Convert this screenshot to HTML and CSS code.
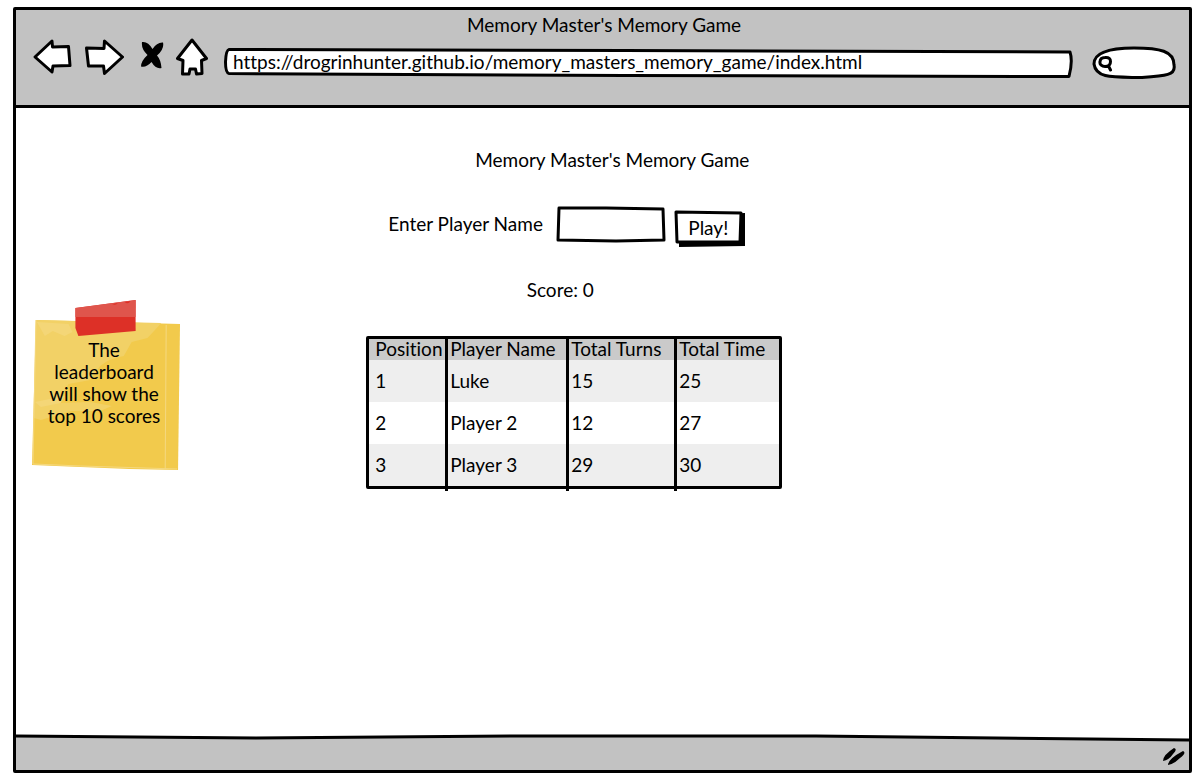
FILE: index.html
```html
<!DOCTYPE html>
<html lang="en">
<head>
<meta charset="utf-8">
<title>Memory Master's Memory Game</title>
<link rel="stylesheet" href="styles.css">
</head>
<body>
<div class="browser">
  <header class="chrome">
    <div class="chrome-title">Memory Master's Memory Game</div>
    <div class="toolbar">
      <button class="tool" aria-label="Back"><svg width="40" height="40" viewBox="0 0 40 40"><path class="sketch" d="M3 19 L20 3 L20.500 9 L36.500 8.500 L38 27.500 L21 28 L20 34 Z"/></svg></button>
      <button class="tool tool-forward" aria-label="Forward"><svg width="40" height="40" viewBox="0 0 40 40"><path class="sketch" d="M38.500 19 L20.500 3 L20 10.500 L2.500 10 L4.500 28 L19.500 28 L20.500 35.500 Z"/></svg></button>
      <button class="tool tool-stop" aria-label="Stop"><svg width="24" height="40" viewBox="0 0 24 40"><path d="M2 4 Q8 3 12.500 11 Q17 4 23 4.500 Q24.500 11 17 17.500 Q21 22 21.500 30 Q16 31.500 11.500 24 Q6 30 1 28.500 Q1 23 7.500 17 Q1 11 2 4Z"/></svg></button>
      <button class="tool tool-home" aria-label="Home"><svg width="32" height="40" viewBox="0 0 32 40"><path class="sketch" d="M16 2 L30.500 20.500 L25.500 22.500 L26 35.500 L20.500 36 L19.500 31 L14 31 L13 36 L6.500 36 L7 22.500 L1.500 20.500 Z"/></svg></button>
      <label class="address">
        <svg class="frame" viewBox="0 0 848 32" preserveAspectRatio="none" aria-hidden="true"><path class="sketch" d="M5 2.500 Q2 3 1.500 15 Q1.500 26 5 26.500 L400 28.500 L844 29.500 Q848 14 845 5 L400 3.500 Z"/></svg>
        <input class="address-input" type="text" aria-label="Address" value="https://drogrinhunter.github.io/memory_masters_memory_game/index.html">
      </label>
      <label class="search">
        <svg class="frame" viewBox="0 0 84 36" preserveAspectRatio="none" aria-hidden="true"><path class="sketch" d="M2 19 C2 9 14 3 42 3 C68 3 82 6 82 20 C84 30 74 31 50 32.500 C22 32 4 34 2 19Z"/></svg>
        <svg class="search-icon" width="16" height="18" viewBox="0 0 16 18" aria-hidden="true"><path class="lens" d="M7 3.500 C11 3 12.500 5 12.500 7.500 C12.500 11 10 12.500 7 12.500 C4 12.500 1.500 10.500 2 8 C2 5 4 3.500 7 3.500Z M10.500 12 L12.500 16"/></svg>
        <input class="search-input" type="search" aria-label="Search">
      </label>
    </div>
  </header>

  <main class="page">
    <aside class="note">
      <svg class="note-paper" viewBox="0 0 152 172" preserveAspectRatio="none" aria-hidden="true">
        <path fill="#f2ca4c" d="M5 20 L151 24 L149 170 L100 169 L50 167 L1 165 Z"/>
        <path fill="#f2d166" d="M5 20 L132 23 Q122 34 118 38 L102 42 L94 56 Q80 58 70 66 L60 80 L38 84 L30 98 L26 103 L60 102 L82 106 L70 111 L40 111 L10 120 L3 118 Z"/>
        <path fill="#f4d677" d="M6 22 L38 24 L42 32 L34 36 L22 31 L14 36 Z M4 102 L34 96 L30 103 L10 107 Z"/>
        <path fill="none" stroke="#f5d980" stroke-width="1" d="M137 25 L136 169 M5 20 L2 164 L50 166 L148 169"/>
        <path fill="#dd3027" d="M45 8 L106 0 L106 31 L48 36 L45 28 Z"/>
        <path fill="#df554c" d="M45 8 L106 0 L106 17 L45 17 Z"/>
        <path fill="#dd3027" d="M82 4 L88 3 Q86 6 82 4 M95 2 L101 1 Q98 5 95 2"/>
      </svg>
      <p class="note-text">The<br>leaderboard<br>will show the<br>top 10 scores</p>
    </aside>

    <section class="game">
      <h1 class="game-title">Memory Master's Memory Game</h1>
      <form class="player-form">
        <label class="player-label" for="player">Enter Player Name</label>
        <span class="player-box">
          <svg class="frame" viewBox="0 0 110 38" preserveAspectRatio="none" aria-hidden="true"><path class="sketch" d="M3 2 L50 2 L107 3 L108 34 L60 35 L2 34 Z"/></svg>
          <input class="player-input" id="player" type="text">
        </span>
        <button class="play" type="button">
          <svg class="frame" viewBox="0 0 72 38" preserveAspectRatio="none" aria-hidden="true"><path d="M5 5 L71 3 L71 36 L5 37 Z"/><path class="sketch" d="M2 2 L67 3 L66 32 L3 32 Z"/></svg>
          <span class="play-text">Play!</span>
        </button>
      </form>
      <p class="score">Score: 0</p>
      <div class="board">
        <table class="scores">
          <thead><tr><th class="col-position">Position</th><th class="col-name">Player Name</th><th class="col-turns">Total Turns</th><th>Total Time</th></tr></thead>
          <tbody>
            <tr><td>1</td><td>Luke</td><td>15</td><td>25</td></tr>
            <tr><td>2</td><td>Player 2</td><td>12</td><td>27</td></tr>
            <tr><td>3</td><td>Player 3</td><td>29</td><td>30</td></tr>
          </tbody>
        </table>
      </div>
    </section>
  </main>

  <footer class="status">
    <svg class="status-line" viewBox="0 0 1173 10" preserveAspectRatio="none" aria-hidden="true"><path class="status-fill" d="M0 3 L240 5 L500 3 L800 3 L1173 7 V10 H0Z"/><path class="sketch-line" d="M0 3 L240 5 L500 3 L800 3 L1173 7"/></svg>
    <svg class="grip" width="24" height="20" viewBox="0 0 24 20" aria-hidden="true"><path d="M1 15 Q1 9 12 2 Q16 3 11 8 Q7 14 1 15Z M6 19 Q6 13 21 5 Q25 7 18 12 Q12 18 6 19Z"/></svg>
  </footer>
</div>
</body>
</html>
```
FILE: styles.css
```css
* { box-sizing: border-box; }

body {
  margin: 0;
  min-height: 100vh;
  padding: 7px 12px 10px 13px;
  display: flex;
  background: #fff;
  color: #000;
  font: 19px/22px Lato, "Open Sans", sans-serif;
  font-variant-ligatures: none;
}

input, button {
  margin: 0;
  padding: 0;
  border: 0;
  background: transparent;
  color: inherit;
  font: inherit;
}

.browser {
  flex: 1;
  display: flex;
  flex-direction: column;
  border: 3px solid #000;
  border-radius: 2px;
}

.sketch, .sketch-line {
  fill: #fff;
  stroke: #000;
  stroke-width: 3;
  stroke-linejoin: round;
}
.sketch-line { fill: none; }

.frame {
  position: absolute;
  inset: 0;
  width: 100%;
  height: 100%;
}

.chrome {
  height: 98px;
  padding: 4px 13px 0 16px;
  background: #c2c2c2;
  border-bottom: 3px solid #000;
}
.chrome-title { text-align: center; }
.toolbar {
  display: flex;
  align-items: center;
  height: 44px;
}
.tool { display: flex; }
.tool-forward { margin-left: 12px; }
.tool-stop { margin-left: 16px; }
.tool-home { margin-left: 12px; }
.address {
  position: relative;
  flex: 1;
  height: 32px;
  margin: 10px 19px 0 16px;
}
.address-input {
  position: relative;
  width: 100%;
  height: 28px;
  padding: 0 9px;
}
.search {
  position: relative;
  width: 84px;
  height: 36px;
  margin-top: 10px;
  display: flex;
  align-items: center;
  padding: 0 10px 0 6px;
}
.search-icon { position: relative; }
.search-input {
  position: relative;
  flex: 1;
  min-width: 0;
}
.lens {
  fill: none;
  stroke: #000;
  stroke-width: 3;
  stroke-linecap: round;
}

.page {
  flex: 1;
  display: flex;
  align-items: flex-start;
  padding-left: 15px;
}
.note {
  position: relative;
  width: 150px;
  height: 172px;
  margin-top: 192px;
  padding: 39px 4px 0 0;
}
.note-paper {
  position: absolute;
  inset: 0;
  width: 100%;
  height: 100%;
}
.note-text {
  position: relative;
  margin: 0;
  text-align: center;
}

.game {
  width: 416px;
  margin-left: 16%;
  padding-top: 41px;
}
.game-title {
  margin: 0;
  padding-left: 76px;
  font-size: 19px;
  font-weight: 400;
  text-align: center;
}
.player-form {
  display: flex;
  align-items: center;
  margin: 31px 0 0 22px;
}
.player-label {
  width: 168px;
  padding-bottom: 2px;
}
.player-box {
  position: relative;
  width: 110px;
  height: 38px;
}
.player-input {
  position: relative;
  width: 100%;
  height: 38px;
  padding: 0 8px;
}
.play {
  position: relative;
  width: 72px;
  height: 38px;
  margin: 8px 0 0 8px;
  padding: 0 4px 2px 0;
}
.play-text { position: relative; }
.score {
  margin: 31px 28px 0 0;
  text-align: center;
}

.board {
  margin-top: 35px;
  border: 3px solid #000;
  border-radius: 2px;
}
.scores {
  width: 100%;
  table-layout: fixed;
  border-collapse: separate;
  border-spacing: 0;
}
.scores th, .scores td {
  padding: 0 0 0 2px;
  border-left: 3px solid #000;
  text-align: left;
  font-weight: 400;
  white-space: nowrap;
}
.scores th:first-child, .scores td:first-child {
  border-left: 0;
  padding-left: 6px;
}
.scores th {
  height: 21px;
  padding-bottom: 2px;
  line-height: 19px;
  background: #cacaca;
}
.scores td {
  position: relative;
  height: 42px;
}
.scores tbody tr:nth-child(odd) td { background: #eee; }

/* The column rules run a little past the table's lower edge. */
.scores tr:last-child td + td::after {
  content: "";
  position: absolute;
  left: -3px;
  bottom: -5px;
  width: 3px;
  height: 5px;
  background: #000;
}
.col-position { width: 76px; }
.col-name { width: 121px; }
.col-turns { width: 108px; }

.status {
  position: relative;
  display: flex;
  flex-direction: column;
  height: 37px;
  background: linear-gradient(transparent 9px, #c2c2c2 9px);
}
.status-line { width: 100%; height: 10px; }
.status-fill { fill: #c2c2c2; }
.grip {
  align-self: flex-end;
  margin: 3px 3px 0 0;
}
```
